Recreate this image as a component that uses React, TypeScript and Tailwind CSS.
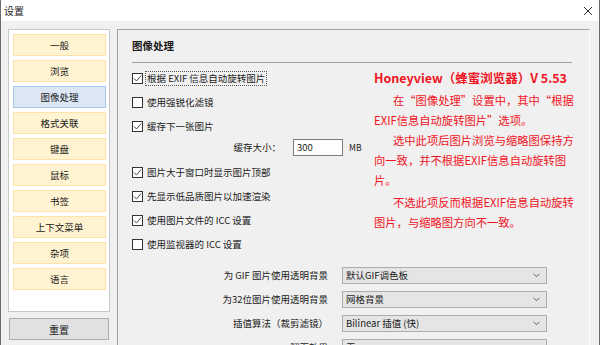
import React from 'react';

const FONT = '"Noto Sans CJK SC", "Noto Sans", sans-serif';

const NAV = ['一般', '浏览', '图像处理', '格式关联', '键盘', '鼠标', '书签', '上下文菜单', '杂项', '语言'];

const CHECKS: { label: string; checked: boolean; focus?: boolean }[] = [
  { label: '根据 EXIF 信息自动旋转图片', checked: true, focus: true },
  { label: '使用强锐化滤镜', checked: false },
  { label: '缓存下一张图片', checked: true },
];

const CHECKS2: { label: string; checked: boolean }[] = [
  { label: '图片大于窗口时显示图片顶部', checked: true },
  { label: '先显示低品质图片以加速渲染', checked: true },
  { label: '使用图片文件的 ICC 设置', checked: true },
  { label: '使用监视器的 ICC 设置', checked: false },
];

const SELECTS = [
  { label: '为 GIF 图片使用透明背景', value: '默认GIF调色板' },
  { label: '为32位图片使用透明背景', value: '网格背景' },
  { label: '插值算法（裁剪滤镜）', value: 'Bilinear 插值 (快)' },
  { label: '翻页效果', value: '无' },
];

function CheckBox({ checked }: { checked: boolean }) {
  return (
    <span className="flex h-[11px] w-[11px] shrink-0 items-center justify-center border border-[#333333] bg-white">
      {checked && (
        <svg width="9" height="9" viewBox="0 0 9 9">
          <path d="M1 4.5 L3.5 7 L8 1.5" fill="none" stroke="#4a4a4a" strokeWidth="1" />
        </svg>
      )}
    </span>
  );
}

function CheckRow({ label, checked, focus }: { label: string; checked: boolean; focus?: boolean }) {
  return (
    <div className="flex h-[24px] items-center gap-[2px] pl-[14px]">
      <CheckBox checked={checked} />
      <span className={focus ? 'border border-dotted border-[#555] px-[1px] leading-[13px]' : 'px-[2px]'}>{label}</span>
    </div>
  );
}

export default function App() {
  return (
    <div
      className="flex h-[345px] w-[600px] flex-col overflow-hidden border-x border-[#6b6b6b] bg-[#f0f0f0] text-[9.5px] text-[#1a1a1a]"
      style={{ fontFamily: FONT }}
    >
      {/* Title bar */}
      <div className="flex h-[21px] shrink-0 items-center justify-between bg-white pl-[3px] pr-[6px]">
        <span className="text-[10px] text-[#222]">设置</span>
        <svg width="10" height="10" viewBox="0 0 10 10">
          <path d="M1 1 L9 9 M9 1 L1 9" stroke="#333" strokeWidth="1" />
        </svg>
      </div>

      <div className="flex flex-1 pt-[8px]">
        {/* Left nav */}
        <div className="ml-[7px] flex w-[102px] flex-col gap-[6px]">
          <div className="flex h-[283px] flex-col gap-[4px] border border-[#c8c8c8] bg-white pl-[4px] pr-[3px] pt-[4px]">
            {NAV.map((n) => (
              <div
                key={n}
                className={
                  n === '图像处理'
                    ? 'flex h-[22px] items-center justify-center border border-[#a9c6ea] bg-[#dce7f5]'
                    : 'flex h-[22px] items-center justify-center border border-[#fde1a6] bg-[#fff3d1]'
                }
              >
                {n}
              </div>
            ))}
          </div>
          <div className="ml-[1px] flex h-[22px] w-[100px] items-center justify-center border border-[#adadad] bg-[#e1e1e1] text-[10px]">
            重置
          </div>
        </div>

        {/* Right panel */}
        <div className="relative ml-[7px] flex w-[473px] flex-col border-l border-t border-[#a0a0a0] border-r border-r-white">
          <div className="flex h-[32px] items-center pl-[14px] text-[10.5px] font-bold">图像处理</div>
          <div className="ml-[14px] mr-[17px] h-px bg-[#a0a0a0]" />
          <div className="mt-[3px] flex flex-col">
            {CHECKS.map((c) => (
              <CheckRow key={c.label} {...c} />
            ))}
            <div className="flex h-[18px] items-center">
              <span className="w-[163px] text-right">缓存大小：</span>
              <div className="ml-[12px] flex h-[17px] w-[50px] items-center border border-[#7a7a7a] bg-white pl-[3px]">300</div>
              <span className="ml-[6px] text-[8.5px]">MB</span>
            </div>
            <div className="mt-[4px] flex flex-col">
              {CHECKS2.map((c) => (
                <CheckRow key={c.label} {...c} />
              ))}
            </div>
            <div className="mt-[7px] flex flex-col">
              {SELECTS.map((s) => (
                <div key={s.label} className="flex h-[24px] items-center">
                  <span className="w-[210px] text-right">{s.label}</span>
                  <div className="ml-[14px] flex h-[17px] w-[205px] items-center justify-between border border-[#acacac] bg-[#e5e5e5] pl-[3px] pr-[6px]">
                    <span>{s.value}</span>
                    <svg width="7" height="5" viewBox="0 0 7 5">
                      <path d="M0.5 0.8 L3.5 3.8 L6.5 0.8" fill="none" stroke="#555" strokeWidth="0.9" />
                    </svg>
                  </div>
                </div>
              ))}
            </div>
          </div>

          {/* Red annotation overlay */}
          <div className="absolute left-[256px] top-[38px] flex flex-col text-[11.3px] leading-[20px] text-[#f0141e]">
            <span className="whitespace-nowrap text-[12.5px] font-bold leading-[20px]">Honeyview（蜂蜜浏览器）V 5.53</span>
            <span className="mt-[2px] whitespace-nowrap pl-[19px]">在“图像处理”设置中，其中“根据</span>
            <span className="whitespace-nowrap">EXIF信息自动旋转图片”选项。</span>
            <span className="whitespace-nowrap pl-[19px]">选中此项后图片浏览与缩略图保持方</span>
            <span className="whitespace-nowrap">向一致，并不根据EXIF信息自动旋转图</span>
            <span className="whitespace-nowrap">片。</span>
            <span className="mt-[2px] whitespace-nowrap pl-[19px]">不选此项反而根据EXIF信息自动旋转</span>
            <span className="whitespace-nowrap">图片，与缩略图方向不一致。</span>
          </div>
        </div>
      </div>
    </div>
  );
}
